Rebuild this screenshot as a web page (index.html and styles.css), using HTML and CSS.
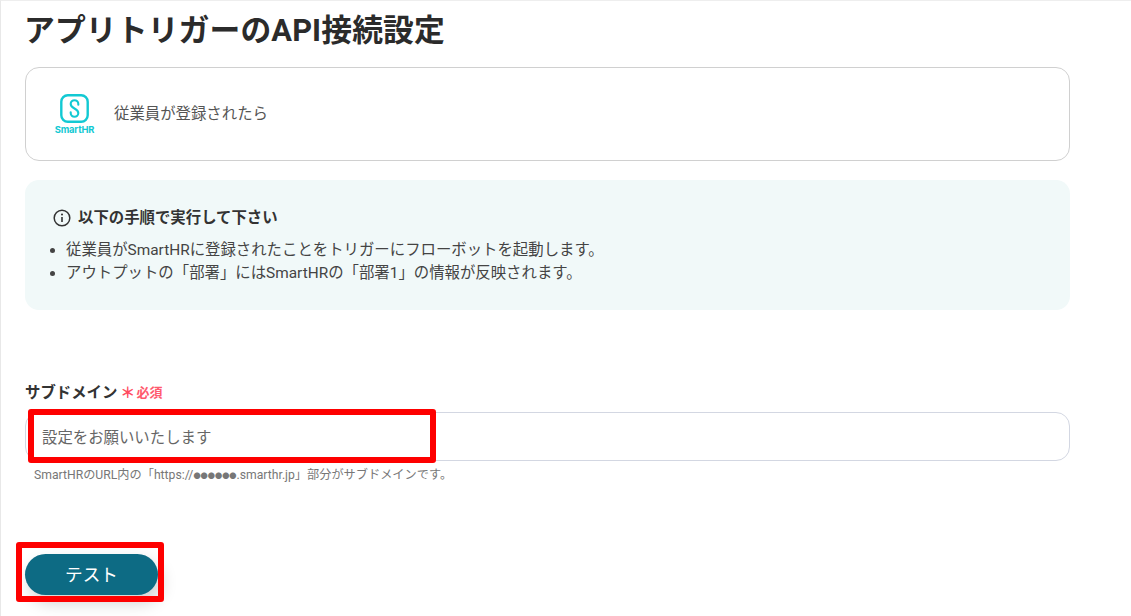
FILE: index.html
```html
<!DOCTYPE html>
<html lang="ja">
<head>
<meta charset="utf-8">
<title>アプリトリガーのAPI接続設定</title>
<link rel="stylesheet" href="styles.css">
</head>
<body>
<main class="page">
  <h1 class="title">アプリトリガーのAPI接続設定</h1>
  <section class="trigger-card">
    <div class="logo">
      <svg class="logo-mark" width="29" height="29" viewBox="0 0 29 29" aria-hidden="true">
        <rect x="1.3" y="1.3" width="26.4" height="26.4" rx="6.5" fill="none" stroke="#12c9d3" stroke-width="2.4"/>
        <path d="M18.3 10.8 V10 a3.8 3.8 0 0 0 -7.6 0 c0 2 1 3 3.8 4.5 c2.8 1.5 3.8 2.5 3.8 4.5 a3.8 3.8 0 0 1 -7.6 0 V18.2" fill="none" stroke="#12c9d3" stroke-width="2.1" stroke-linecap="round"/>
      </svg>
      <span class="logo-name">SmartHR</span>
    </div>
    <span class="trigger-name">従業員が登録されたら</span>
  </section>
  <section class="info">
    <h2 class="info-title">
      <svg width="18" height="18" viewBox="0 0 18 18" aria-hidden="true">
        <circle cx="9" cy="9" r="7.8" fill="none" stroke="#333" stroke-width="1.5"/>
        <circle cx="9" cy="5.5" r="1.05" fill="#333"/>
        <path d="M9 8 V13" stroke="#333" stroke-width="1.6"/>
      </svg>
      以下の手順で実行して下さい
    </h2>
    <ul class="info-list">
      <li>従業員がSmartHRに登録されたことをトリガーにフローボットを起動します。</li>
      <li>アウトプットの「部署」にはSmartHRの「部署1」の情報が反映されます。</li>
    </ul>
  </section>
  <section class="field">
    <label class="field-label">サブドメイン<span class="req"><span class="req-mark">＊</span>必須</span></label>
    <div class="input-wrap">
      <div class="input">設定をお願いいたします</div>
      <div class="mark mark-input"></div>
    </div>
    <p class="hint">SmartHRのURL内の「https://<span class="dots">●●●●●●</span>.smarthr.jp」部分がサブドメインです。</p>
  </section>
  <div class="actions">
    <button class="test-btn" type="button">テスト</button>
    <div class="mark mark-btn"></div>
  </div>
</main>
</body>
</html>
```
FILE: styles.css
```css
* { box-sizing: border-box; }
html, body { margin: 0; height: 100%; }
body {
  background: #fff;
  color: #333;
  font-family: "Roboto", "Noto Sans CJK JP", sans-serif;
  overflow: hidden;
}
.page {
  width: 1131px;
  height: 616px;
  border-top: 1px solid #eee;
  border-left: 1px solid #e8e8e8;
  padding: 0 61px 0 24px;
}
.title {
  margin: 9px 0 0 -1px;
  font-size: 30.8px;
  line-height: 42px;
  font-weight: 700;
  color: #2b2b2b;
  letter-spacing: 0.12px;
}
.trigger-card {
  margin-top: 15px;
  height: 94px;
  border: 1px solid #d0d0d0;
  border-radius: 14px;
  display: flex;
  align-items: center;
  padding-left: 28px;
  gap: 19px;
}
.logo {
  width: 41px;
  display: flex;
  flex-direction: column;
  align-items: center;
  padding-top: 1px;
}
.logo-mark { display: block; }
.logo-name {
  font-family: "Inter", sans-serif;
  font-size: 9.4px;
  line-height: 11px;
  margin-top: 1px;
  font-weight: 700;
  color: #12c9d3;
  letter-spacing: -0.2px;
  white-space: nowrap;
}
.trigger-name { font-size: 15.4px; line-height: 20px; color: #555; }
.info {
  margin-top: 19px;
  height: 130px;
  background: #f1f9f9;
  border-radius: 14px;
  padding: 26px 28px 0;
}
.info-title {
  margin: 0 0 9px;
  display: flex;
  align-items: center;
  gap: 7px;
  font-size: 15.4px;
  line-height: 24px;
  font-weight: 700;
  color: #333;
}
.info-list {
  margin: 0;
  padding-left: 13px;
  font-size: 15.4px;
  line-height: 23px;
  color: #444;
}
.field { margin-top: 73px; }
.field-label {
  display: flex;
  align-items: center;
  font-size: 15.4px;
  line-height: 20px;
  font-weight: 700;
  color: #333;
}
.req {
  display: inline-flex;
  align-items: center;
  font-size: 13px;
  color: #ff5a6e;
  margin-left: 3px;
}
.req-mark { font-size: 15px; margin-right: 1px; font-weight: 700; color: #ff4a5e; }
.input-wrap { position: relative; margin-top: 9px; }
.input {
  height: 49px;
  border: 1px solid #d3d7e2;
  border-radius: 14px;
  padding: 0 0 2px 16px;
  display: flex;
  align-items: center;
  font-size: 15.4px;
  color: #666;
  background: #fff;
}
.mark {
  position: absolute;
  border: 6px solid #fe0000;
  border-radius: 3px;
}
.mark-input { left: 3px; top: -3px; width: 408px; height: 54px; }
.hint {
  margin: 4px 0 0 9px;
  font-size: 12.2px;
  line-height: 20px;
  color: #777;
}
.dots { font-size: 7.2px; vertical-align: 1px; }
.actions { position: relative; margin-top: 68px; width: 133px; }
.test-btn {
  display: block;
  width: 133px;
  height: 41px;
  border: 0;
  border-radius: 21px;
  background: #0d6b84;
  color: #fff;
  font: inherit;
  font-size: 17.6px;
  padding: 0 0 2px;
  box-shadow: 4px 8px 16px rgba(0, 0, 0, .18);
}
.mark-btn { left: -9px; top: -12px; width: 148px; height: 60px; }
```
